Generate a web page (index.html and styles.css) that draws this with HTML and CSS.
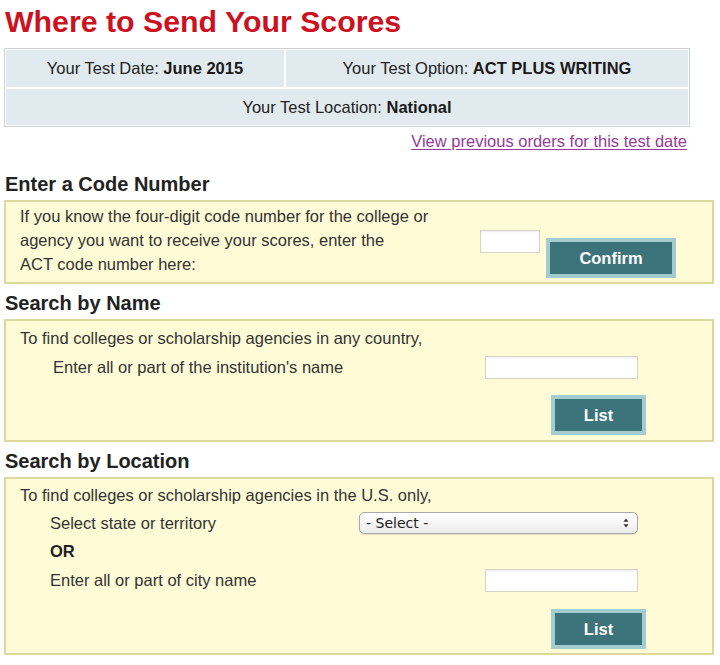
FILE: index.html
```html
<!DOCTYPE html>
<html lang="en">
<head>
<meta charset="utf-8">
<title>Where to Send Your Scores</title>
<link rel="stylesheet" href="styles.css">
</head>
<body>
<div class="page">
  <h1 class="title">Where to Send Your Scores</h1>

  <div class="info">
    <div class="info-cell"><span>Your Test Date: <b>June 2015</b></span></div>
    <div class="info-cell"><span>Your Test Option: <b>ACT PLUS WRITING</b></span></div>
    <div class="info-cell info-wide"><span>Your Test Location: <b>National</b></span></div>
  </div>
  <div class="link-row"><a href="#" class="prev-link">View previous orders for this test date</a></div>

  <h2 class="section-title first">Enter a Code Number</h2>
  <div class="box box-code">
    <p class="code-text">If you know the four-digit code number for the college or<br>agency you want to receive your scores, enter the<br>ACT code number here:</p>
    <input class="field field-code" type="text">
    <button class="btn btn-confirm" type="button">Confirm</button>
  </div>

  <h2 class="section-title">Search by Name</h2>
  <div class="box box-name">
    <p class="line">To find colleges or scholarship agencies in any country,</p>
    <div class="row row-name">
      <span class="label label-name">Enter all or part of the institution's name</span>
      <input class="field field-wide" type="text">
    </div>
    <div class="btn-row btn-row-name"><button class="btn btn-list" type="button">List</button></div>
  </div>

  <h2 class="section-title">Search by Location</h2>
  <div class="box box-loc">
    <p class="line">To find colleges or scholarship agencies in the U.S. only,</p>
    <div class="row row-state">
      <span class="label label-loc">Select state or territory</span>
      <div class="select-wrap">
        <select class="select"><option>- Select -</option></select>
        <svg class="select-arrows" width="6" height="10" viewBox="0 0 6 10"><path d="M3 0.5 L5.5 3.8 L0.5 3.8 Z M3 9.5 L5.5 6.2 L0.5 6.2 Z" fill="#333"/></svg>
      </div>
    </div>
    <div class="row row-or"><span class="label label-loc or">OR</span></div>
    <div class="row row-city">
      <span class="label label-loc">Enter all or part of city name</span>
      <input class="field field-wide" type="text">
    </div>
    <div class="btn-row btn-row-loc"><button class="btn btn-list" type="button">List</button></div>
  </div>
</div>
</body>
</html>
```
FILE: styles.css
```css
html, body {
  margin: 0;
  padding: 0;
  background: #ffffff;
}
body {
  font-family: "Liberation Sans", Arial, Helvetica, sans-serif;
  color: #333333;
  font-size: 16.5px;
}
.page {
  padding: 4px 0 0 4px;
  width: 710px;
}
.title {
  margin: 0 0 8px 1px;
  font-size: 30.3px;
  line-height: 36px;
  font-weight: bold;
  color: #cc1122;
}
.info {
  width: 686px;
  box-sizing: border-box;
  display: grid;
  grid-template-columns: 278px 1fr;
  grid-template-rows: 37px 36px;
  gap: 2px;
  padding: 1px;
  border: 1px solid #c9d1d6;
  background: #ffffff;
}
.info-cell {
  background: #e1eaee;
  color: #222222;
  display: flex;
  align-items: center;
  justify-content: center;
  font-size: 16.5px;
}
.info-cell b { color: #1a1a1a; }
.info-wide { grid-column: 1 / 3; }
.link-row {
  width: 683px;
  text-align: right;
  margin-top: 5px;
  line-height: 18px;
}
.prev-link {
  color: #973a98;
  font-size: 16.5px;
  text-decoration: underline;
  text-underline-offset: 2px;
}
.section-title {
  margin: 7px 0 4px 1px;
  font-size: 20px;
  line-height: 24px;
  font-weight: bold;
  color: #222222;
}
.section-title.first { margin-top: 22px; }
.box {
  box-sizing: border-box;
  width: 710px;
  background: #fffbd6;
  border: 2px solid #ddd8a0;
}
.box-code {
  height: 84px;
  display: flex;
  align-items: flex-end;
  padding: 2px 36px 4px 14px;
}
.code-text {
  margin: 0;
  flex: 1;
  align-self: flex-start;
  line-height: 24px;
}
.field {
  box-sizing: border-box;
  height: 23px;
  border: 1px solid #d6d4c6;
  background: #ffffff;
  box-shadow: inset 0 1px 2px rgba(0,0,0,0.08);
  padding: 0 4px;
  font: 14px "Liberation Sans", Arial, sans-serif;
}
.field-code {
  width: 60px;
  margin: 0 6px 25px 0;
}
.field-wide {
  width: 153px;
}
.btn {
  box-sizing: border-box;
  height: 40px;
  border: 4px solid #a2ccd0;
  background: #3d737a;
  color: #ffffff;
  font: bold 16.5px "Liberation Sans", Arial, sans-serif;
  padding: 0;
  cursor: pointer;
}
.btn-confirm { width: 130px; }
.btn-list { width: 95px; }
.box-name {
  height: 123px;
  padding: 5px 0 5px 14px;
}
.box-loc {
  height: 178px;
  padding: 4px 0 4px 14px;
}
.line {
  margin: 0;
  line-height: 24px;
}
.row {
  display: flex;
  align-items: center;
  height: 24px;
}
.row-name {
  margin-top: 5px;
  padding-right: 74px;
}
.row-state { margin-top: 4px; padding-right: 74px; }
.row-or { margin-top: 4px; }
.row-city { margin-top: 5px; padding-right: 74px; }
.label { flex: 1; }
.label-name { padding-left: 33px; }
.label-loc { padding-left: 30px; }
.or { font-weight: bold; color: #222222; }
.btn-row {
  display: flex;
  justify-content: flex-end;
  padding-right: 66px;
}
.btn-row-name { margin-top: 16px; }
.btn-row-loc { margin-top: 17px; }
.select-wrap {
  position: relative;
  width: 279px;
  height: 22px;
}
.select {
  -webkit-appearance: none;
  appearance: none;
  box-sizing: border-box;
  width: 279px;
  height: 22px;
  border: 1px solid #a9a9a9;
  border-radius: 5px;
  background: linear-gradient(#ffffff, #ececec);
  box-shadow: 0 1px 1px rgba(0,0,0,0.12);
  font: 14px "DejaVu Sans", sans-serif;
  color: #222222;
  padding: 0 0 0 6px;
}
.select-arrows {
  position: absolute;
  right: 9px;
  top: 6px;
  pointer-events: none;
}
```
